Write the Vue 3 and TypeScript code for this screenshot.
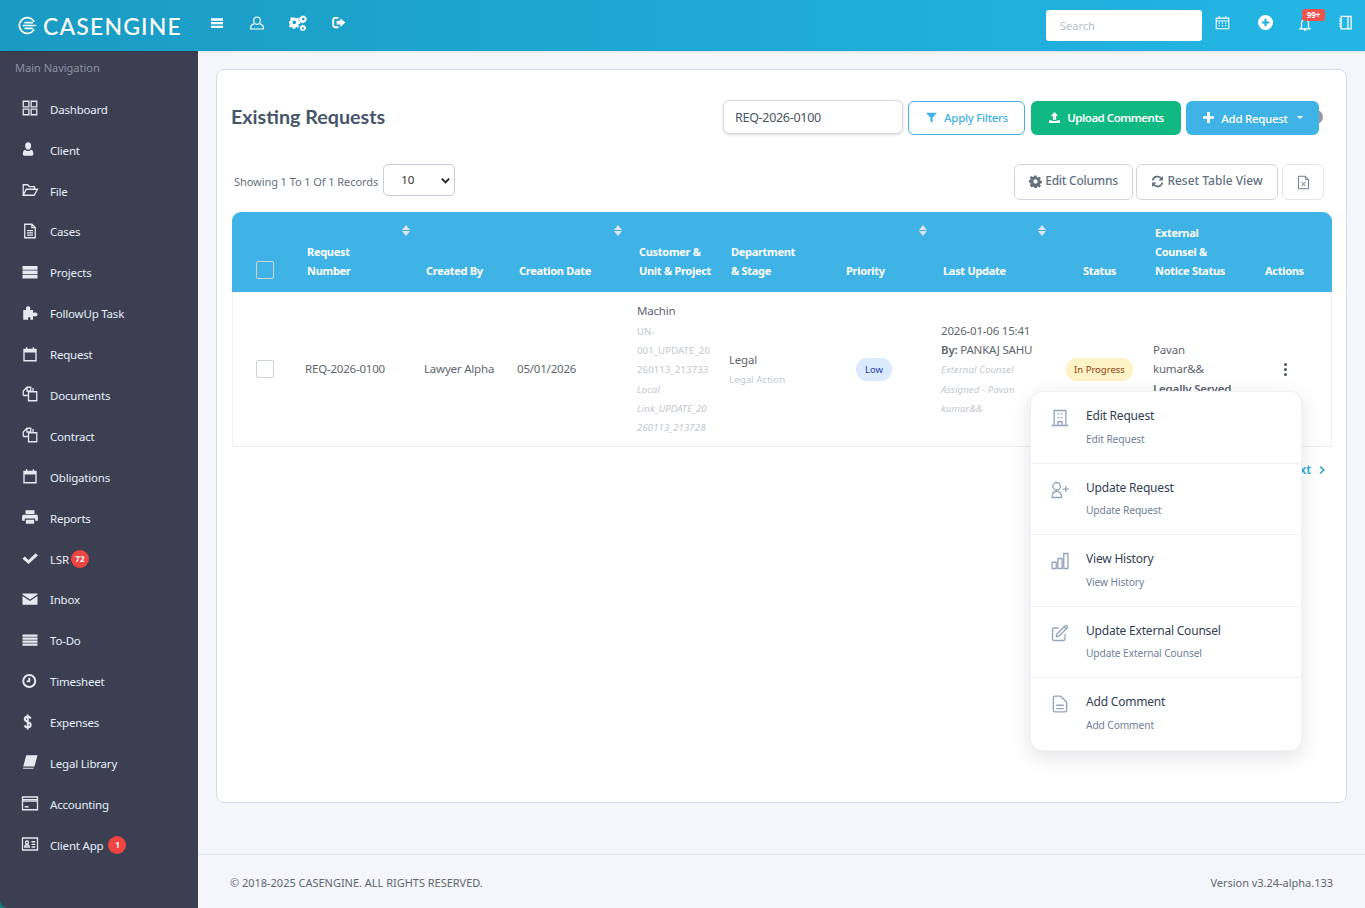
<script setup lang="ts">
interface NavItem { label: string; f?: string; s?: string; w?: number; badge?: string }
const cal = { f: 'M4 6h16v4H4z', s: 'M4 6h16v15H4zM7.500 3v4M16.500 3v4', w: 1.800 }
const nav: NavItem[] = [
  { label: 'Dashboard', s: 'M3 3h7.500v7.500H3zM13.500 3H21v7.500h-7.500zM3 13.500h7.500V21H3zM13.500 13.500H21V21h-7.500z' },
  { label: 'Client', f: 'M9.500 3c2.500 0 4 2 4 4.500s-1.500 5.500-4 5.500-4-3-4-5.500 1.500-4.500 4-4.500zM5.500 13c1 1 2.500 1.800 4 1.800s3-.8 4-1.800c2.200.5 3 3 3 5.500 0 1.500-1 2.500-2.500 2.500h-9C3.500 21 2.500 20 2.500 18.500 2.500 16 3.300 13.500 5.500 13z' },
  { label: 'File', s: 'M3 19V5h6l2 2.500h7V11M3 19l4-8h15l-4.500 8z' },
  { label: 'Cases', s: 'M5 3h9.500L19 7.500V21H5zM14.500 3v4.500H19M8 11.500h8M8 14.500h8M8 17.500h8' },
  { label: 'Projects', f: 'M2 4h20v5H2zM2 10h20v5H2zM2 16h20v4.500H2z' },
  { label: 'FollowUp Task', f: 'M3 8h4c-1-3 0-5 2.500-5S13 5 12 8h4v4c2-1 6-1 6 2s-4 3-6 2v5h-3.500v-3.500h-3V21H3z' },
  { label: 'Request', ...cal },
  { label: 'Documents', s: 'M3 14V8l5-5h5v5H8V3M3 14h6M10 9h11v12H10zM16 4v5' },
  { label: 'Contract', s: 'M3 14V8l5-5h5v5H8V3M3 14h6M10 9h11v12H10zM16 4v5' },
  { label: 'Obligations', ...cal },
  { label: 'Reports', f: 'M6 3h12v5H6zM3 9h18c1 0 1.500 1 1.500 2v6H19v-3H5v3H1.500v-6c0-1 .5-2 1.500-2zM6.500 15.500h11V21h-11z' },
  { label: 'LSR', badge: '72', f: 'M2 13l3-3 5 4.500L19.500 5.500l3 3L10 20z' },
  { label: 'Inbox', f: 'M2 4.500h20v1.500l-10 6.500L2 6zM2 8l10 6.500L22 8v11.500H2z' },
  { label: 'To-Do', f: 'M2 4.500h20v3H2zM2 8.500h20v3H2zM2 12.500h20v3H2zM2 16.500h20v3H2z' },
  { label: 'Timesheet', s: 'M11 4a8 8 0 1 0 0 16 8 8 0 0 0 0-16zM11 7.500v5H7.500', w: 2.600 },
  { label: 'Expenses', s: 'M13 7.500c-.8-2-2-2.800-4-2.800-2.500 0-4 1.300-4 3.300s1.500 3 4 3.800 4 1.800 4 4-1.500 3.400-4 3.400c-2.200 0-3.600-1-4.300-2.800M9 2v20', w: 2.600 },
  { label: 'Legal Library', f: 'M7 3h15l-4 15H3zM2.500 19.500H17L16.500 21H4c-1.500 0-2-1-1.500-1.500z' },
  { label: 'Accounting', s: 'M2 4h20v17H2zM2 9.500h20M2 7.500h20M5 17h5' },
  { label: 'Client App', badge: '1', s: 'M2 4h20v16H2zM14 9h5M14 12.500h5M14 16h5M5 16c0-2 1-3 3-3s3 1 3 3zM8 8a2 2 0 1 0 0 4 2 2 0 0 0 0-4z' },
]
const menu = [
  { t: 'Edit Request', d: 'M2.400 21h19.200M5 21V3h14v18M9.500 21v-4.500h5V21M9.500 7h1M13.500 7h1M9.500 11.500h1M13.500 11.500h1' },
  { t: 'Update Request', d: 'M12.500 7.500a4.500 4.500 0 1 1-9 0 4.500 4.500 0 0 1 9 0zM2.500 21c0-4.500 2-7.500 5.500-7.500s6 3 6 7.500zM19 8v6M16 11h6' },
  { t: 'View History', d: 'M2.500 13.500h5V21h-5zM9.500 9h5v12h-5zM16.500 3h5v18h-5z' },
  { t: 'Update External Counsel', d: 'M17 4.500l2.500 2.500M20.500 3.500a1.800 1.800 0 0 1 0 2.500L11 15.500l-3.500 1 1-3.500L18 3.500a1.800 1.800 0 0 1 2.500 0zM18 14v5a2 2 0 0 1-2 2H5a2 2 0 0 1-2-2V8a2 2 0 0 1 2-2h5' },
  { t: 'Add Comment', d: 'M6 2.500h6.500L20 10v9.500a2 2 0 0 1-2 2H6a2 2 0 0 1-2-2v-15a2 2 0 0 1 2-2zM8 13.500h8M8 17.500h8' },
]
const heads = [
  { w: 61, cls: 'ck' },
  { w: 119, t: 'Request<br>Number', sr: 1.5 },
  { w: 93, t: 'Created By' },
  { w: 120, t: 'Creation Date', sr: 2.5 },
  { w: 92, t: 'Customer &amp;<br>Unit &amp; Project' },
  { w: 115, t: 'Department<br>&amp; Stage' },
  { w: 97, t: 'Priority', sr: 1.5 },
  { w: 119, t: 'Last Update', sr: 1.5 },
  { w: 93, t: 'Status', cls: 'st' },
  { w: 110, t: 'External<br>Counsel &amp;<br>Notice Status' },
  { w: 81, t: 'Actions' },
]
</script>

<template>
  <div class="app">
    <header class="top">
      <div class="brand">
        <svg class="logo" viewBox="0 0 24 24" fill="none" stroke="#fff" stroke-width="2.200" stroke-linecap="round">
          <path d="M20 6.500A10 10 0 1 0 20 17.500M9 8.500h9M7 12h15M9 15.500h9" />
        </svg>
        <span class="brandtext">CASENGINE</span>
      </div>
      <div class="tools">
        <svg class="t i16" viewBox="0 0 24 24" fill="#fff"><path d="M3 5h18v3.500H3zM3 10.500h18V14H3zM3 16h18v3.500H3z" /></svg>
        <svg class="t i16" viewBox="0 0 24 24" fill="none" stroke="#fff" stroke-width="1.800"><path d="M12 3c3 0 5 2.300 5 5.200S15 14 12 14s-5-2.900-5-5.800S9 3 12 3zM8.500 13C5 14 2.500 16 2.500 19v2h19v-2c0-3-2.500-5-6-6" /></svg>
        <svg class="t i18" viewBox="0 0 24 24" fill="#fff"><path fill-rule="evenodd" d="M8.500 5l1.500.5 1.500-1 2 2-1 1.500.6 1.500 1.900.4v3l-1.900.4-.6 1.500 1 1.500-2 2-1.500-1-1.500.6-.4 1.900h-3l-.4-1.900-1.500-.6-1.500 1-2-2 1-1.500L1.700 13 0 12.500v-3l1.800-.4.6-1.500-1-1.500 2-2 1.500 1 1.500-.6zM7 8.500a2.500 2.500 0 1 0 0 5 2.500 2.500 0 0 0 0-5z" /><path fill-rule="evenodd" d="M18.500 1l1 1.500 1.800-.3.400 1.800 1.800.6-.5 1.800 1 1.100-1.500 1.300.1 1.700-1.800.3-1 1.500-1.700-.8-1.600.7-.9-1.500-1.700-.4.2-1.700-1.300-1.300 1.300-1.200-.2-1.800 1.800-.3.800-1.600 1.700.7zM19 5a1.800 1.800 0 1 0 0 3.600A1.800 1.800 0 0 0 19 5zM18.500 14l1 1.200 1.500-.2.400 1.500 1.400.6-.6 1.400.6 1.400-1.400.6-.4 1.500-1.500-.2-1 1.200-1.200-1-1.500.2-.4-1.500-1.400-.6.6-1.400-.6-1.400 1.400-.6.4-1.500 1.500.2zM18.500 17.500a1.500 1.500 0 1 0 0 3 1.500 1.500 0 0 0 0-3z" /></svg>
        <svg class="t i15" viewBox="0 0 24 24" fill="#fff"><path d="M15 5v4H9v6h6v4l8-7zM7 3h5v3H7c-1 0-2 1-2 2v8c0 1 1 2 2 2h5v3H7c-3 0-5-2-5-5V8c0-3 2-5 5-5z" /></svg>
      </div>
      <div class="right">
        <div class="search">Search</div>
        <svg class="r14" viewBox="0 0 24 24" fill="none" stroke="#fff" stroke-width="1.800"><path d="M2 5h20v17H2zM2 9.500h20M7 2v4M17 2v4M6 13h2M11 13h2M16 13h2M6 17h2M11 17h2M16 17h2" /></svg>
        <svg class="r15" viewBox="0 0 24 24"><circle cx="12" cy="12" r="12" fill="#fff" /><path d="M12 6v12M6 12h12" stroke="#22b0dd" stroke-width="3.500" /></svg>
        <div class="bell">
          <svg class="r14b" viewBox="0 0 24 24" fill="none" stroke="#fff" stroke-width="2"><path d="M6 17V10a6 6 0 0 1 12 0v7l2.500 2.500h-17zM10 21.500h4" /></svg>
          <span class="b99">99+</span>
        </div>
        <svg class="r14" viewBox="0 0 24 24" fill="none" stroke="#fff" stroke-width="2"><path d="M5 2h16v20H5zM16 2v20M2 6h4M2 10h4M2 14h4M2 18h4" /></svg>
      </div>
    </header>

    <div class="body">
      <aside class="side">
        <div class="navtitle">Main Navigation</div>
        <nav>
          <a v-for="n in nav" :key="n.label" class="nav">
            <svg class="navicon" viewBox="0 0 24 24">
              <path v-if="n.f" :d="n.f" fill="#e6eaf0" fill-rule="evenodd" />
              <path v-if="n.s" :d="n.s" fill="none" stroke="#e6eaf0" :stroke-width="n.w || 1.700" />
            </svg>
            <span class="navlabel">{{ n.label }}</span>
            <span v-if="n.badge" class="navbadge" :class="{ wide: n.badge === '1' }">{{ n.badge }}</span>
          </a>
        </nav>
      </aside>

      <div class="main">
        <div class="content">
          <section class="card">
            <div class="titlerow">
              <h1>Existing Requests</h1>
              <div class="actions">
                <div class="filter">REQ-2026-0100</div>
                <button class="btn apply">
                  <svg class="bi" viewBox="0 0 24 24" fill="currentColor"><path d="M2 3h20l-8 9.500V22l-4-3v-6.500z" /></svg>
                  Apply Filters
                </button>
                <button class="btn upload">
                  <svg class="bi" viewBox="0 0 24 24" fill="currentColor"><path d="M12 2l6.500 7H15v7H9V9H5.500zM2 17h5.500v1.500h9V17H22v5H2z" /></svg>
                  Upload Comments
                </button>
                <div class="addwrap">
                  <span class="peek"></span>
                  <button class="btn add">
                    <svg class="bi" viewBox="0 0 24 24" fill="currentColor"><path d="M9.500 2h5v7.500H22v5h-7.500V22h-5v-7.500H2v-5h7.500z" /></svg>
                    <span class="addt">Add Request</span>
                    <span class="caret"></span>
                  </button>
                </div>
              </div>
            </div>

            <div class="toolrow">
              <div class="records">
                <span>Showing 1 To 1 Of 1 Records</span>
                <div class="select">10
                  <svg viewBox="0 0 12 12" fill="none" stroke="#222" stroke-width="2"><path d="M2 4l4 4 4-4" /></svg>
                </div>
              </div>
              <div class="tbtns">
                <button class="tbtn edit">
                  <svg class="ti" viewBox="0 0 24 24" fill="currentColor"><path fill-rule="evenodd" d="M10 1h4l.6 3 2 .8 2.600-1.700 2.800 2.800-1.700 2.600.8 2 3 .6v4l-3 .6-.8 2 1.700 2.600-2.800 2.800-2.600-1.700-2 .8-.6 3h-4l-.6-3-2-.8-2.600 1.700L1.400 19l1.700-2.600-.8-2-3-.6v-4l3-.6.8-2L1.400 4.600l2.800-2.800 2.600 1.700 2-.8zM12 8a4 4 0 1 0 0 8 4 4 0 0 0 0-8z" /></svg>
                  Edit Columns
                </button>
                <button class="tbtn reset">
                  <svg class="ti" viewBox="0 0 24 24" fill="none" stroke="currentColor" stroke-width="3.200"><path d="M3 10a9.300 9.300 0 0 1 16-4l2 2M21 14a9.300 9.300 0 0 1-16 4l-2-2" /><path d="M22 2v8h-8zM2 22v-8h8z" fill="currentColor" stroke="none" /></svg>
                  Reset Table View
                </button>
                <button class="tbtn xl">
                  <svg class="xi" viewBox="0 0 24 24" fill="none" stroke="#64748b" stroke-width="1.500"><path d="M4 2h11l5 5v15H4zM15 2v5h5M9 11l6 7M15 11l-6 7" /></svg>
                </button>
              </div>
            </div>

            <table class="grid">
              <colgroup><col v-for="(h, i) in heads" :key="i" :style="{ width: h.w + 'px' }" /></colgroup>
              <thead>
                <tr>
                  <th v-for="(h, i) in heads" :key="i" :class="h.cls">
                    <span v-if="h.cls === 'ck'" class="box hbox"></span>
                    <span v-else v-html="h.t"></span>
                    <span v-if="h.sr" class="sort" :style="{ right: h.sr + 'px' }"></span>
                  </th>
                </tr>
              </thead>
              <tbody>
                <tr>
                  <td class="ck"><span class="box"></span></td>
                  <td>REQ-2026-0100</td>
                  <td>Lawyer Alpha</td>
                  <td>05/01/2026</td>
                  <td class="nw">Machin<br><span class="sub">UN-<br>001_UPDATE_20<br>260113_213733</span><br><span class="sub it">Local<br>Link_UPDATE_20<br>260113_213728</span></td>
                  <td class="nw">Legal<br><span class="sub">Legal Action</span></td>
                  <td><span class="pill low">Low</span></td>
                  <td class="nw">2026-01-06 15:41<br><b>By:</b> PANKAJ SAHU<br><span class="sub it">External Counsel<br>Assigned - Pavan<br>kumar&amp;&amp;</span></td>
                  <td><span class="pill prog">In Progress</span></td>
                  <td class="nw">Pavan<br>kumar&amp;&amp;<br><b>Legally Served</b></td>
                  <td class="dots"><i></i><i></i><i></i></td>
                </tr>
              </tbody>
            </table>

            <div class="pager">Next <svg viewBox="0 0 12 12" fill="none" stroke="#2eaadf" stroke-width="2"><path d="M4 2l4 4-4 4" /></svg></div>

            <div class="pop">
              <div v-for="m in menu" :key="m.t" class="popitem">
                <svg class="popicon" viewBox="0 0 24 24" fill="none" stroke="#94a3bd" stroke-width="1.600" stroke-linejoin="round" stroke-linecap="round"><path :d="m.d" /></svg>
                <div>
                  <div class="poptitle">{{ m.t }}</div>
                  <div class="popsub">{{ m.t }}</div>
                </div>
              </div>
            </div>
          </section>
        </div>
        <footer class="foot">
          <span>© 2018-2025 CASENGINE. ALL RIGHTS RESERVED.</span>
          <span>Version v3.24-alpha.133</span>
        </footer>
      </div>
    </div>
  </div>
</template>

<style>
html, body { margin: 0; background: #f4f6fb; }
</style>

<style scoped>
.app { width: 1365px; height: 908px; display: flex; flex-direction: column; overflow: hidden; font-family: "Noto Sans", "Open Sans", sans-serif; font-size: 12px; color: #5b6470; background: #0f7f7a; }
.top { height: 51px; flex: none; display: flex; align-items: flex-start; background: linear-gradient(90deg, #1a9bc3, #23b6e4); color: #fff; box-sizing: border-box; box-shadow: 0 1px 2px rgba(0,0,0,.1); position: relative; z-index: 2; }
.brand { width: 198px; flex: none; display: flex; align-items: center; padding-left: 18px; box-sizing: border-box; gap: 6px; height: 51px; }
.logo { width: 19px; height: 19px; }
.brandtext { font-family: "Lato", sans-serif; font-weight: 500; font-size: 23px; letter-spacing: 1.15px; }
.tools { display: flex; align-items: center; padding-left: 11px; gap: 24px; height: 45px; }
.t { display: block; }
.i16 { width: 16px; height: 16px; }
.i18 { width: 18px; height: 18px; }
.i15 { width: 15px; height: 15px; }
.right { margin-left: auto; display: flex; align-items: center; height: 45px; padding-right: 12px; }
.search { width: 156px; height: 31px; margin-top: 6px; box-sizing: border-box; background: #fff; border-radius: 3px; padding: 0 14px; line-height: 32px; font-size: 11px; color: #b9bfcc; margin-right: 13px; }
.r14 { width: 15px; height: 15px; }
.r15 { width: 15px; height: 15px; margin-left: 28px; }
.bell { position: relative; margin-left: 25px; width: 14px; height: 15px; margin-right: 26px; }
.r14b { width: 14px; height: 15px; display: block; margin-top: 2px; }
.b99 { position: absolute; left: 4px; top: -6px; width: 23px; height: 12px; border-radius: 3px; background: #ef5350; font-size: 8px; font-weight: 700; line-height: 12px; text-align: center; color: #fff; }

.body { flex: 1; display: flex; min-height: 0; }
.side { width: 198px; flex: none; background: #3b3f51; border-bottom-left-radius: 8px; color: #e6eaf0; }
.navtitle { padding: 9px 0 0 15px; height: 28.500px; box-sizing: border-box; font-size: 11px; line-height: 15px; color: #8a93a6; }
nav { padding-top: 9.300px; }
.nav { height: 40.900px; display: flex; align-items: center; padding-left: 21px; box-sizing: border-box; }
.navicon { width: 18px; height: 18px; flex: none; margin-right: 11px; margin-top: -2px; }
.navlabel { font-size: 11.500px; letter-spacing: -.2px; color: #e6eefa; }
.navbadge { min-width: 18px; height: 18px; border-radius: 50%; background: #ef4444; color: #fff; font-size: 8px; font-weight: 700; line-height: 18px; text-align: center; margin-left: 2px; }
.navbadge.wide { margin-left: 5px; }

.main { flex: 1; min-width: 0; display: flex; flex-direction: column; background: #f4f6fb; }
.content { flex: 1; padding: 18px 18px 51px; min-height: 0; }
.card { position: relative; height: 100%; box-sizing: border-box; background: #fff; border: 1px solid #d6dde7; border-radius: 8px; padding: 30px 13px 0 14px; }
.titlerow { display: flex; align-items: center; justify-content: space-between; height: 35px; }
h1 { margin: -2px 0 0; font-family: "Lato", sans-serif; font-size: 19.700px; font-weight: 700; color: #475569; }
.actions { display: flex; align-items: center; gap: 5px; margin-right: 14px; }
.filter { width: 180px; height: 34px; margin-top: -2px; box-sizing: border-box; border: 1px solid #d2d6de; border-radius: 6px; box-shadow: 0 1px 3px rgba(0,0,0,.12); padding-left: 11px; line-height: 33px; font-size: 12.500px; letter-spacing: -.3px; color: #4b5563; }
.btn { height: 34px; box-sizing: border-box; border-radius: 6px; border: 1px solid transparent; font: inherit; font-size: 11.500px; font-weight: 500; letter-spacing: -.3px; display: flex; align-items: center; justify-content: center; gap: 6px; padding: 0; }
.bi { width: 13px; height: 13px; flex: none; }
.apply { width: 117px; background: #fff; border-color: #3fb2e6; color: #3fb2e6; }
.upload { width: 150px; background: #10b981; color: #fff; margin-left: 1px; font-weight: 600; letter-spacing: -.5px; }
.add { width: 133px; background: #40b3e6; color: #fff; position: relative; }
.addt { margin-top: 2px; }
.caret { width: 0; height: 0; border: 3.500px solid transparent; border-top: 3.500px solid #fff; border-bottom: 0; margin-left: 3px; }
.addwrap { position: relative; }
.peek { position: absolute; right: -4px; top: 9px; width: 14px; height: 14px; border-radius: 50%; background: #999; }

.toolrow { display: flex; justify-content: space-between; margin-top: 29px; height: 36px; margin-right: 9px; padding-left: 3px; }
.records { display: flex; align-items: flex-start; gap: 5px; font-size: 11px; letter-spacing: -.07px; color: #64707f; }
.records span { margin-top: 10px; }
.select { width: 72px; height: 32px; box-sizing: border-box; border: 1px solid #c9cfd8; border-radius: 5px; font-size: 11.500px; color: #333; line-height: 30px; padding-left: 17px; position: relative; }
.select svg { position: absolute; right: 3px; top: 10px; width: 11px; height: 11px; }
.tbtns { display: flex; gap: 3px; }
.tbtn { height: 36px; box-sizing: border-box; border: 1px solid #d0d6df; border-radius: 6px; background: #fff; font: inherit; font-size: 12px; font-weight: 500; color: #64707f; display: flex; align-items: center; justify-content: center; gap: 3px; padding: 0 0 3px; }
.edit { width: 119px; letter-spacing: -.25px; }
.reset { width: 142px; }
.ti { width: 13px; height: 13px; margin-top: 1px; }
.tbtn.xl { width: 42px; padding: 0; margin-left: 1px; border-color: #e2e6ec; }
.xi { width: 15px; height: 15px; }

.grid { table-layout: fixed; border-collapse: separate; border-spacing: 0; width: 1100px; margin: 12px 0 0 1px; }
th { position: relative; height: 80px; box-sizing: border-box; background: #40b3e6; color: #fff; font-size: 11px; font-weight: 700; letter-spacing: -.3px; line-height: 19px; text-align: left; vertical-align: bottom; padding: 0 0 12px 14px; white-space: nowrap; }
th:first-child { border-top-left-radius: 9px; }
th:last-child { border-top-right-radius: 9px; }
th.ck { padding: 0 0 12px 24px; }
td.ck { padding: 0 0 0 23px; }
th.st { padding-left: 35px; }
.box { display: block; width: 18px; height: 18px; box-sizing: border-box; border: 1px solid #cfd5dc; border-radius: 2px; background: transparent; }
.hbox { margin-bottom: 1px; }
.sort { position: absolute; top: 13px; width: 9px; height: 11px; }
.sort::before, .sort::after { content: ""; position: absolute; left: 0; width: 0; height: 0; border-left: 4.500px solid transparent; border-right: 4.500px solid transparent; }
.sort::before { top: 0; border-bottom: 5px solid #dde3ea; }
.sort::after { bottom: 0; border-top: 5px solid #dde3ea; }
td { height: 155px; box-sizing: border-box; padding: 0 0 0 12px; font-size: 11.500px; letter-spacing: -.2px; line-height: 19.300px; color: #5f6670; vertical-align: middle; border-bottom: 1px solid #e9ecf0; }
td:first-child { border-left: 1px solid #eef0f3; }
td:last-child { border-right: 1px solid #eef0f3; }
.nw { white-space: nowrap; }
.sub { font-size: 9.600px; letter-spacing: .1px; line-height: 1; color: #c2c7cf; }
.it { font-style: italic; }
b { font-weight: 600; }
.pill { display: inline-block; height: 23px; line-height: 23px; border-radius: 11px; text-align: center; font-size: 9.500px; letter-spacing: 0; vertical-align: 1px; }
.low { width: 36px; margin-left: 12px; background: #dbeafe; color: #1e40af; }
.prog { width: 67px; margin-left: 6px; background: #fef3c7; color: #92400e; }
.dots { padding-left: 33px; }
.dots i { display: block; width: 3px; height: 3px; border-radius: 50%; background: #4b5563; margin: 2px 0; }

.pager { display: flex; justify-content: flex-end; align-items: center; gap: 6px; margin-top: 14px; margin-right: 6px; font-size: 12px; font-weight: 600; color: #2eaadf; }
.pager svg { width: 10px; height: 10px; }

.pop { position: absolute; left: 813px; top: 321px; width: 270px; background: #fff; border: 1px solid #eef1f5; border-radius: 12px; box-shadow: 0 6px 20px rgba(15,23,42,.12); }
.popitem { display: flex; align-items: flex-start; height: 71.500px; box-sizing: border-box; padding: 15.300px 0 0 19px; border-bottom: 1px solid #eef1f6; }
.popitem:last-child { border-bottom: 0; }
.popicon { width: 20px; height: 20px; margin-right: 16px; margin-top: 1px; flex: none; }
.poptitle { font-size: 12px; letter-spacing: -.2px; line-height: 18px; color: #334155; }
.popsub { font-size: 10.200px; letter-spacing: -.1px; line-height: 14px; margin-top: 6.500px; color: #708099; }

.foot { height: 54px; flex: none; box-sizing: border-box; border-top: 1px solid #e3e7ee; display: flex; justify-content: space-between; align-items: center; padding: 2px 32px 0 32px; font-size: 11px; letter-spacing: -.02px; color: #5f6670; }
</style>
